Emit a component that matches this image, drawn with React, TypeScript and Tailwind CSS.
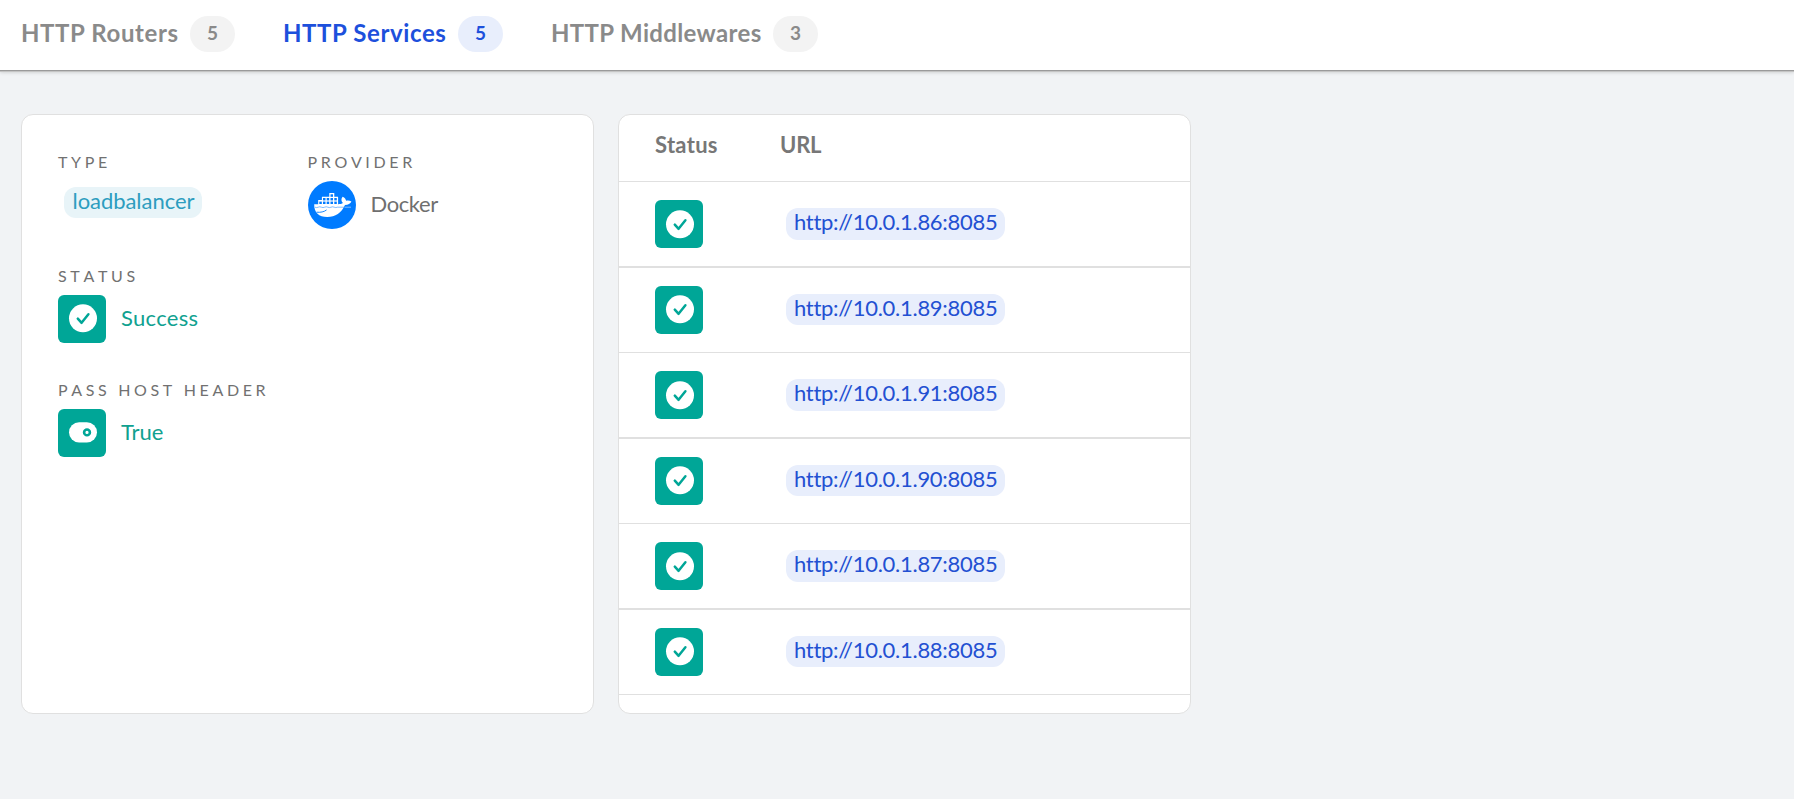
import type { ReactNode } from 'react';
import clsx from 'clsx';

const tabs = [
  { label: 'HTTP Routers', count: 5, active: false, width: 'w-[157px] tracking-[0.6px]' },
  { label: 'HTTP Services', count: 5, active: true, width: 'w-[163px] tracking-[0.6px]' },
  { label: 'HTTP Middlewares', count: 3, active: false, width: 'w-[210px] tracking-[0.35px]' },
];

const servers = [
  'http://10.0.1.86:8085',
  'http://10.0.1.89:8085',
  'http://10.0.1.91:8085',
  'http://10.0.1.90:8085',
  'http://10.0.1.87:8085',
  'http://10.0.1.88:8085',
];

function CheckBadge({ low = false }: { low?: boolean }) {
  return (
    <svg
      className="size-12 shrink-0 rounded-[6px] bg-[#00a697]"
      viewBox={low ? '0 -1 48 48' : '0 0 48 48'}
      fill="none"
    >
      <circle cx="25" cy="23.3" r="14" fill="#fff" />
      <path
        d="M19.8 23.6l3.8 4.2 6.8-8.6"
        stroke="#00a697"
        strokeWidth="2.5"
        strokeLinecap="round"
        strokeLinejoin="round"
      />
    </svg>
  );
}

function ToggleBadge() {
  return (
    <svg className="size-12 shrink-0 rounded-[6px] bg-[#00a697]" viewBox="0 0 48 48" fill="none">
      <rect x="11" y="13.3" width="28" height="20.2" rx="10.1" fill="#fff" />
      <circle cx="29" cy="23.4" r="2.9" stroke="#00a697" strokeWidth="2.6" />
    </svg>
  );
}

function DockerBadge() {
  return (
    <svg className="size-12 shrink-0" viewBox="0 0 48 48" fill="none">
      <circle cx="24" cy="24" r="24" fill="#007bff" />
      <path
        fill="#fff"
        d="M6.2 23.2H10.2V19H13.9V15.8H21.3V12H26.3V15.8H30.1V19.4V23.2C32.2 23.2 33.9 22.8 34.9 22C33 20.2 33 17.6 34.6 15.7C36.8 16.7 37.9 18.2 38.1 19.8C40 19.3 41.9 19.6 43.4 20.6C42.3 22.9 40.2 24 37 24C33.4 32 27.4 36 19.3 36C10.8 36 6 31.6 6.2 23.2Z"
      />
      <g fill="#007bff">
        <rect x="22.5" y="13.3" width="2.5" height="2.5" />
        <rect x="15" y="17" width="2.5" height="2.4" />
        <rect x="18.7" y="17" width="2.5" height="2.4" />
        <rect x="22.5" y="17" width="2.5" height="2.4" />
        <rect x="26.3" y="17" width="2.5" height="2.4" />
        <rect x="11.3" y="20.6" width="2.5" height="2.4" />
        <rect x="15" y="20.6" width="2.5" height="2.4" />
        <rect x="18.7" y="20.6" width="2.5" height="2.4" />
        <rect x="22.5" y="20.6" width="2.5" height="2.4" />
        <rect x="26.3" y="20.6" width="2.5" height="2.4" />
      </g>
      <path
        d="M7 26.2q1.6 .8 3.2 0t3.2 0 3.2 0 3.2 0 3.2 0 3.2 0 3.2 0H36"
        stroke="#007bff"
        strokeWidth="0.5"
      />
      <path d="M36.5 26.2H43" stroke="#fff" strokeWidth="0.5" />
      <path d="M8.5 31.2C12.6 31.6 16 30.9 18.6 28.9" stroke="#007bff" strokeWidth="0.9" />
    </svg>
  );
}

function Field({ label, children }: { label: string; children: ReactNode }) {
  return (
    <div className="h-[78px]">
      <div className="text-base leading-[22px] tracking-[3.65px] whitespace-nowrap text-[#717171] [font-kerning:none]">
        {label}
      </div>
      {children}
    </div>
  );
}

function IconValue({ icon, className, children }: { icon: ReactNode; className: string; children: ReactNode }) {
  return (
    <div className="mt-2 flex items-center gap-[15px]">
      {icon}
      <span className={clsx('pb-[3px] text-[22px] leading-[27px]', className)}>{children}</span>
    </div>
  );
}

export default function App() {
  return (
    <div className="min-h-[799px] bg-[#f1f3f5] font-['Lato',sans-serif]">
      <nav className="flex h-[70px] items-start gap-12 bg-white pt-4 pl-[21px] shadow-[0_1px_0_#9a9a9a,0_2px_0_#c4c4c4,0_2px_4px_rgba(0,0,0,0.2)]">
        {tabs.map((tab) => (
          <div key={tab.label} className="flex items-start gap-3">
            <span
              className={clsx(
                'text-2xl leading-[33px] font-bold whitespace-nowrap',
                tab.width,
                tab.active ? 'text-[#1d50dc]' : 'text-[#8a8a8a]',
              )}
            >
              {tab.label}
            </span>
            <span
              className={clsx(
                'h-9 w-[45px] rounded-full text-center text-[19px] leading-[34px] font-bold',
                tab.active ? 'bg-[#e8eefc] text-[#1d50dc]' : 'bg-[#f3f3f3] text-[#8a8a8a]',
              )}
            >
              {tab.count}
            </span>
          </div>
        ))}
      </nav>

      <main className="flex gap-6 pt-11 pl-[21px]">
        <section className="h-[600px] w-[573px] rounded-xl border border-[#e0e0e0] bg-white p-9">
          <div className="grid grid-cols-2 gap-y-9">
            <Field label="TYPE">
              <div className="mt-[14px] ml-1.5 h-[31px] w-[138px] rounded-xl bg-[#e8f4f8] pl-[8.5px] text-[22px] leading-[27px] tracking-[-0.05px] text-[#2d9dbf]">
                loadbalancer
              </div>
            </Field>
            <Field label="PROVIDER">
              <IconValue icon={<DockerBadge />} className="tracking-[-0.4px] text-[#6f6f6f]">
                Docker
              </IconValue>
            </Field>
            <div className="col-span-2">
              <Field label="STATUS">
                <IconValue icon={<CheckBadge />} className="tracking-[0.3px] text-[#10a190]">
                  Success
                </IconValue>
              </Field>
            </div>
            <div className="col-span-2">
              <Field label="PASS HOST HEADER">
                <IconValue icon={<ToggleBadge />} className="text-[#10a190]">
                  True
                </IconValue>
              </Field>
            </div>
          </div>
        </section>

        <section className="h-[600px] w-[573px] rounded-xl border border-[#e0e0e0] bg-white">
          <div className="flex h-[67px] border-b border-[#e0e0e0] pl-9 text-[22px] leading-[59px] font-bold text-[#777777]">
            <div className="w-[125px] tracking-[0.3px]">Status</div>
            <div className="tracking-[-0.2px]">URL</div>
          </div>
          {servers.map((url, i) => (
            <div
              key={url}
              className={clsx(
                'flex border-[#e0e0e0] pt-[18px] pl-9',
                i % 2 === 0 ? 'h-[86px] border-b-2' : 'h-[85px] border-b',
              )}
            >
              <div className="w-[131px]">
                <CheckBadge low={i % 2 === 0} />
              </div>
              <div
                className={clsx(
                  'mt-2 w-[219px] rounded-xl bg-[#e8eefc] pl-2 text-[22px] leading-[27px] tracking-[-0.28px] whitespace-nowrap text-[#2350d2]',
                  i % 2 === 0 ? 'h-8' : 'h-[31px]',
                )}
              >
                {url}
              </div>
            </div>
          ))}
        </section>
      </main>
    </div>
  );
}
